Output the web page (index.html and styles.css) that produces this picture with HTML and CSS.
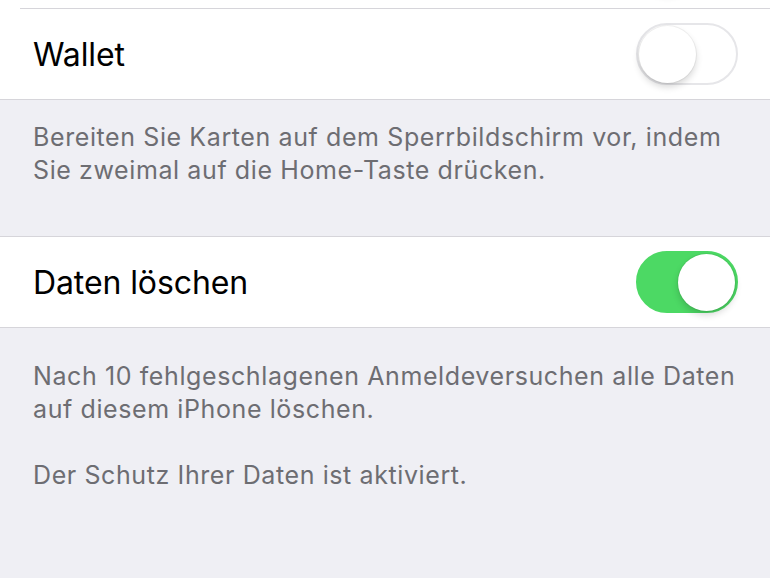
FILE: index.html
```html
<!DOCTYPE html>
<html lang="de">
<head>
    <meta charset="UTF-8">
    <meta name="viewport" content="width=device-width, initial-scale=1.0">
    <title>Code-Sperre</title>
    <link rel="stylesheet" href="styles.css">
</head>
<body>
    <div class="settings">
        <div class="group">
            <div class="cell inset">
                <span class="label"></span>
                <span class="switch"><span class="knob"></span></span>
            </div>
            <div class="cell">
                <span class="label">Wallet</span>
                <span class="switch"><span class="knob"></span></span>
            </div>
        </div>
        <div class="footer first">
            <p>Bereiten Sie Karten auf dem Sperrbildschirm vor, indem Sie zweimal auf die Home-Taste drücken.</p>
        </div>

        <div class="group">
            <div class="cell">
                <span class="label">Daten löschen</span>
                <span class="switch on"><span class="knob"></span></span>
            </div>
        </div>
        <div class="footer">
            <p>Nach 10 fehlgeschlagenen Anmeldeversuchen alle Daten auf diesem iPhone löschen.</p>
            <p>Der Schutz Ihrer Daten ist aktiviert.</p>
        </div>
    </div>
</body>
</html>
```

FILE: styles.css
```css
body {
    margin: 0;
    font-family: Inter, "Noto Sans", sans-serif;
    background-color: #efeff4;
    overflow: hidden;
}

.settings {
    margin-top: -83px;
}

.group {
    background: #fff;
    border-top: 1px solid #d6d5da;
    border-bottom: 1px solid #d6d5da;
}

.cell {
    height: 90px;
    display: flex;
    align-items: center;
    justify-content: space-between;
    padding: 0 32px 0 33px;
    box-sizing: border-box;
}

.cell.inset {
    height: 91px;
    position: relative;
}

/* separator only between cells, indented like iOS */
.cell.inset::after {
    content: "";
    position: absolute;
    left: 20px;
    right: 0;
    bottom: 0;
    height: 1px;
    background: #d6d5da;
}

.label {
    font-size: 32px;
    color: #000;
    letter-spacing: -0.1px;
}

.switch {
    width: 102px;
    height: 62px;
    border-radius: 31px;
    box-sizing: border-box;
    border: 2px solid #e6e6e9;
    background: #fff;
    display: flex;
    align-items: center;
    padding: 0 1px;
}

.knob {
    width: 57px;
    height: 57px;
    border-radius: 50%;
    background: #fff;
    box-shadow: 0 4px 7px rgba(0, 0, 0, 0.16), 0 0 0 1px rgba(0, 0, 0, 0.05);
}

.switch.on {
    background: #4cd964;
    border-color: #4cd964;
    justify-content: flex-end;
}

.footer {
    padding: 32px 33px 22px;
    color: #6d6d72;
    font-size: 25px;
    letter-spacing: 0.6px;
    line-height: 33px;
}

.footer.first {
    padding: 21px 33px 16px;
}

.footer p {
    margin: 0 0 33px;
}
```
